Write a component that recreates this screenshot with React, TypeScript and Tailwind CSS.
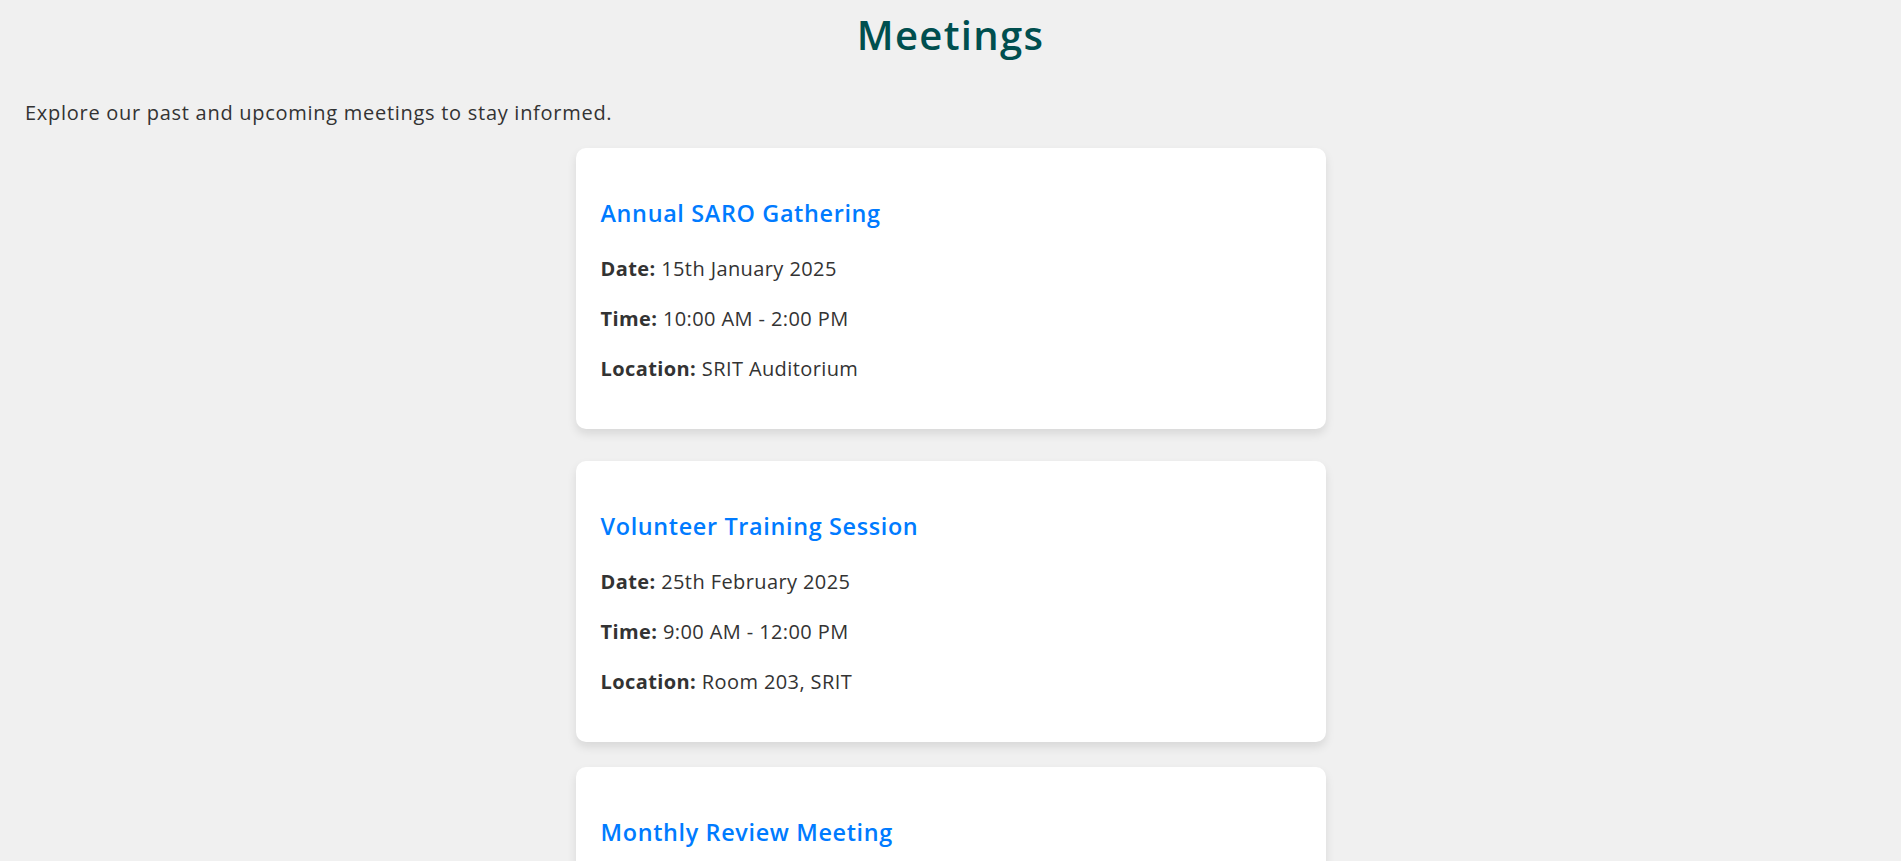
import React from "react";

type Meeting = { title: string; date: string; time: string; location: string };

const meetings: Meeting[] = [
  { title: "Annual SARO Gathering", date: "15th January 2025", time: "10:00 AM - 2:00 PM", location: "SRIT Auditorium" },
  { title: "Volunteer Training Session", date: "25th February 2025", time: "9:00 AM - 12:00 PM", location: "Room 203, SRIT" },
  { title: "Monthly Review Meeting", date: "10th March 2025", time: "4:00 PM - 6:00 PM", location: "Conference Hall, SRIT" },
];

function Card({ m, className }: { m: Meeting; className: string }) {
  return (
    <div
      className={`mx-auto w-full max-w-[750px] rounded-[10px] bg-white px-[25px] pt-[48px] pb-[45px] shadow-[0_5px_10px_rgba(0,0,0,0.1)] ${className}`}
    >
      <h3 className="text-[23.4px] font-semibold leading-[35px] tracking-[0.65px] text-[#007bff]">{m.title}</h3>
      <p className="mt-[23px] text-[20px] leading-[30px] tracking-[0.4px] text-[#333]">
        <span className="font-bold">Date:</span> {m.date}
      </p>
      <p className="mt-[20px] text-[20px] leading-[30px] tracking-[0.4px] text-[#333]">
        <span className="font-bold">Time:</span> {m.time}
      </p>
      <p className="mt-[20px] text-[20px] leading-[30px] tracking-[0.4px] text-[#333]">
        <span className="font-bold">Location:</span> {m.location}
      </p>
    </div>
  );
}

export default function App() {
  return (
    <div
      className="min-h-screen bg-[#f0f0f0] px-[25px] pb-[40px]"
      style={{ fontFamily: '"Open Sans", "Liberation Sans", sans-serif' }}
    >
      <h1 className="pt-[5px] text-center text-[40px] font-semibold leading-[60px] tracking-[1.3px] text-[#004f4f]">
        Meetings
      </h1>
      <p className="mt-[33px] text-[20px] leading-[30px] tracking-[0.72px] text-[#333]">
        Explore our past and upcoming meetings to stay informed.
      </p>
      <div className="mt-[20px] flex flex-col">
        <Card m={meetings[0]} className="mb-[32px]" />
        <Card m={meetings[1]} className="mb-[25px]" />
        <Card m={meetings[2]} className="" />
      </div>
    </div>
  );
}
